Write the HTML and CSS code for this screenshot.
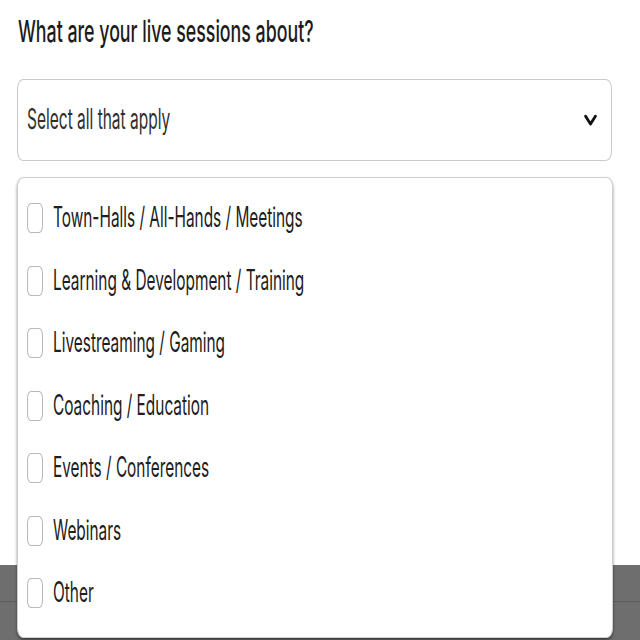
FILE: index.html
```html
<!DOCTYPE html>
<html lang="en">
<head>
<meta charset="utf-8">
<title>Live sessions</title>
<link rel="stylesheet" href="styles.css">
</head>
<body>
<div class="screen">
  <section class="sheet">
    <h1 class="question"><span class="tall">What are your live sessions about?</span></h1>
    <div class="select">
      <span class="placeholder tall">Select all that apply</span>
      <svg class="chevron" width="13" height="12" viewBox="0 0 13 12" aria-hidden="true">
        <polyline points="1.6,2.2 6.5,10 11.4,2.2" fill="none" stroke="#111" stroke-width="2.8" stroke-linecap="round" stroke-linejoin="round"/>
      </svg>
    </div>
  </section>
  <div class="backdrop">
    <div class="band"></div>
    <div class="band band-lower"></div>
  </div>

  <ul class="menu">
    <li class="option"><span class="box"></span><span class="label tall">Town-Halls / All-Hands / Meetings</span></li>
    <li class="option"><span class="box"></span><span class="label tall">Learning &amp; Development / Training</span></li>
    <li class="option"><span class="box"></span><span class="label tall">Livestreaming / Gaming</span></li>
    <li class="option"><span class="box"></span><span class="label tall">Coaching / Education</span></li>
    <li class="option"><span class="box"></span><span class="label tall">Events / Conferences</span></li>
    <li class="option"><span class="box"></span><span class="label tall">Webinars</span></li>
    <li class="option"><span class="box"></span><span class="label tall">Other</span></li>
  </ul>
</div>
</body>
</html>
```

FILE: styles.css
```css
* {
  box-sizing: border-box;
}

html, body {
  margin: 0;
  padding: 0;
  background: #ffffff;
}

body {
  font-family: Inter, "Liberation Sans", sans-serif;
  color: #1e1e1e;
}

.screen {
  position: relative;
  width: 640px;
  height: 640px;
  display: flex;
  flex-direction: column;
  overflow: hidden;
}

/* tall, narrow lettering used throughout the form */
.tall {
  display: inline-block;
  transform: scaleY(1.8);
  transform-origin: center;
}

.sheet {
  height: 565px;
  background: #ffffff;
  padding: 18px 28px 0 17px;
  border-bottom-right-radius: 4px;
}

.question {
  margin: 0 0 0 1px;
  font-size: 17.8px;
  font-weight: 500;
  line-height: 28px;
  color: #1c1c1c;
}

.question .tall {
  transform: scaleY(1.7);
}

.select {
  margin-top: 33px;
  height: 82px;
  border: 1px solid #c9c9c9;
  border-radius: 6px / 10px;
  display: flex;
  align-items: center;
  justify-content: space-between;
  padding: 0 14px 0 9px;
}

.placeholder {
  font-size: 15.5px;
  line-height: 24px;
  color: #2e2e2e;
}

.chevron {
  display: block;
  flex: none;
}

.backdrop {
  flex: 1;
  display: flex;
  flex-direction: column;
  background: #6e6e6e;
}

.band {
  height: 36px;
}

.band-lower {
  flex: 1;
  border-top: 1px solid #5c5c5c;
}

/* open option list, laid over the page */
.menu {
  position: absolute;
  top: 177px;
  left: 17px;
  width: 596px;
  height: 461px;
  margin: 0;
  padding: 9px 0 0 9px;
  list-style: none;
  background: #ffffff;
  border: 1px solid #cfcfcf;
  border-radius: 6px / 10px;
  box-shadow: 0 2px 3px rgba(0, 0, 0, 0.45);
}

.option {
  height: 62.5px;
  display: flex;
  align-items: center;
  gap: 10px;
}

.box {
  flex: none;
  width: 16px;
  height: 30px;
  border: 1.5px solid #b9b9b9;
  border-radius: 4px / 7px;
  background: #ffffff;
}

.label {
  font-size: 15.4px;
  line-height: 24px;
  color: #202020;
}
```
